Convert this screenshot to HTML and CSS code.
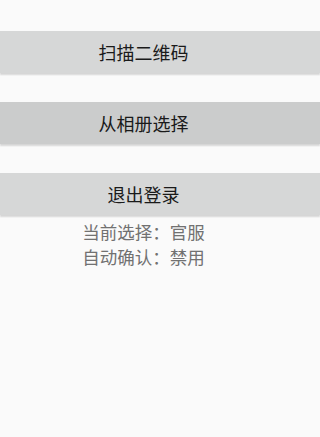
FILE: index.html
```html
<!DOCTYPE html>
<html lang="zh-CN">
<head>
<meta charset="utf-8">
<meta name="viewport" content="width=287">
<link rel="stylesheet" href="styles.css">
</head>
<body>
<main class="page">
  <div class="actions">
    <button class="btn">扫描二维码</button>
    <button class="btn btn-pressed">从相册选择</button>
    <button class="btn">退出登录</button>
  </div>
  <div class="info">
    <div class="info-line">当前选择：官服</div>
    <div class="info-line">自动确认：禁用</div>
  </div>
</main>
</body>
</html>
```
FILE: styles.css
```css
html, body {
  margin: 0;
  padding: 0;
  background: #fafafa;
  height: 100%;
}
.page {
  padding-top: 31px;
  font-family: "Noto Sans CJK SC", "Noto Sans", sans-serif;
}
.actions {
  display: flex;
  flex-direction: column;
  gap: 29px;
}
.btn {
  display: block;
  width: 100%;
  height: 42px;
  margin: 0;
  padding: 0 max(0px, calc(100vw - 287px)) 0 0;
  border: none;
  border-radius: 0;
  background: #d6d7d7;
  color: #1a1a1a;
  font-family: inherit;
  font-size: 18px;
  line-height: 42px;
  text-align: center;
  box-shadow: 0 2px 1.5px rgba(0, 0, 0, 0.14);
}
.btn-pressed {
  background: #cbcccc;
}
.info {
  width: 287px;
  margin-top: 5px;
  text-align: center;
  color: #717171;
  font-size: 17.5px;
  line-height: 24.5px;
}
```
